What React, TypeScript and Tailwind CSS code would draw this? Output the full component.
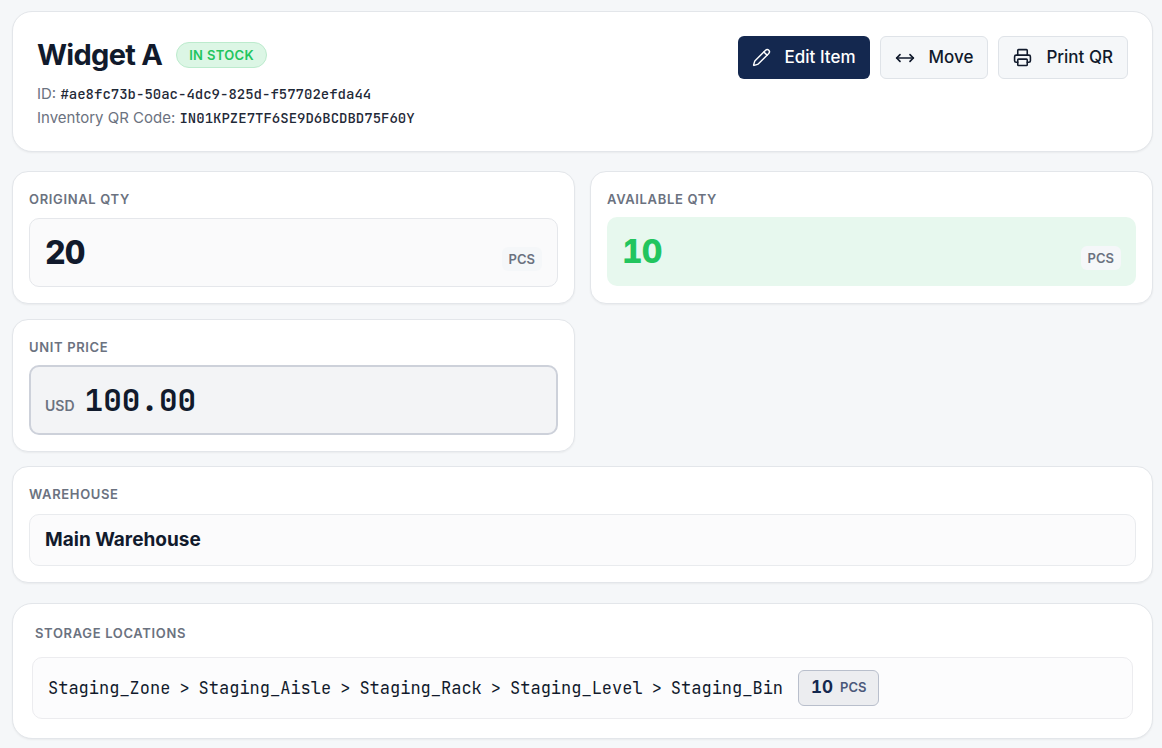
import type { ReactNode } from 'react'
import { MoveHorizontal, Pencil, Printer } from 'lucide-react'

const item = {
  name: 'Widget A',
  status: 'In stock',
  id: '#ae8fc73b-50ac-4dc9-825d-f57702efda44',
  qrCode: 'IN01KPZE7TF6SE9D6BCDBD75F60Y',
  originalQty: '20',
  availableQty: '10',
  unit: 'PCS',
  currency: 'USD',
  unitPrice: '100.00',
  warehouse: 'Main Warehouse',
}

const locations = [
  {
    path: ['Staging_Zone', 'Staging_Aisle', 'Staging_Rack', 'Staging_Level', 'Staging_Bin'],
    qty: '10',
  },
]

const mono = "font-['JetBrains_Mono','Liberation_Mono',monospace]"
const cardClass = 'border border-[#e3e6ea] bg-white shadow-xs'
const labelClass = 'text-[13px] leading-5 font-semibold uppercase tracking-wider text-[#6b7280]'
const buttonClass = 'flex h-[43px] items-center gap-[14px] rounded-md px-[14px] text-[17px] font-medium'
const secondaryButton = `${buttonClass} border border-[#dfe3e8] bg-[#f5f7f9] text-[#111a2c]`

function UnitTag({ children }: { children: ReactNode }) {
  return (
    <span className="mt-3 rounded-md bg-[#f5f7f9] px-[7px] py-0.5 text-[13px] leading-5 font-semibold text-[#6b7280]">
      {children}
    </span>
  )
}

function Card({ label, children }: { label: string; children: ReactNode }) {
  return (
    <section className={`${cardClass} rounded-2xl px-4 pt-[17px] pb-4`}>
      <h2 className={labelClass}>{label}</h2>
      {children}
    </section>
  )
}

export default function App() {
  return (
    <main className="min-h-screen bg-[#f5f7f9] pt-[11px] pr-[9px] pb-[9px] pl-3 font-['Inter',sans-serif] text-[#111a2c]">
      <header className={`flex flex-wrap items-start justify-between gap-4 ${cardClass} rounded-[20px] px-6 pt-6 pb-[21px]`}>
        <div>
          <div className="flex items-center gap-[14px]">
            <h1 className="text-[29px] leading-[38px] font-bold tracking-tight">{item.name}</h1>
            <span className="rounded-full border border-[#bcebcd] bg-[#dcf6e5] px-3 text-[13px] leading-6 font-semibold tracking-wide text-[#22c55e] uppercase">
              {item.status}
            </span>
          </div>
          <p className="mt-2 text-[15px] leading-6 text-[#6b7280]">
            ID: <span className={`${mono} text-[14px] font-medium text-[#1f2937]`}>{item.id}</span>
          </p>
          <p className="text-[15px] leading-6 text-[#6b7280]">
            Inventory QR Code: <span className={`${mono} text-[14px] font-medium text-[#1f2937]`}>{item.qrCode}</span>
          </p>
        </div>
        <div className="flex gap-[10px]">
          <button type="button" className={`${buttonClass} bg-[#14284f] text-white`}>
            <Pencil size={19} strokeWidth={1.8} />
            Edit Item
          </button>
          <button type="button" className={secondaryButton}>
            <MoveHorizontal size={20} strokeWidth={2} />
            Move
          </button>
          <button type="button" className={secondaryButton}>
            <Printer size={19} strokeWidth={2} />
            Print QR
          </button>
        </div>
      </header>

      <div className="mt-[19px] grid grid-cols-2 gap-[15px]">
        <Card label="Original Qty">
          <div className="mt-[9px] flex h-[69px] items-center justify-between rounded-[10px] border border-[#e5e7eb] bg-[#fafafb] px-[15px]">
            <span className="text-[32px] leading-10 font-extrabold tracking-tight tabular-nums">{item.originalQty}</span>
            <UnitTag>{item.unit}</UnitTag>
          </div>
        </Card>
        <Card label="Available Qty">
          <div className="mt-2 flex h-[69px] items-center justify-between rounded-[10px] bg-[#e7f8ee] px-[15px]">
            <span className="text-[32px] leading-10 font-extrabold tracking-tight text-[#22c55e] tabular-nums">
              {item.availableQty}
            </span>
            <UnitTag>{item.unit}</UnitTag>
          </div>
        </Card>
        <Card label="Unit Price">
          <div className="mt-2 flex h-[70px] items-center gap-[10px] rounded-[10px] border-2 border-[#cdd1da] bg-[#f3f4f6] px-[14px]">
            <span className="mt-3 text-[14px] leading-5 font-semibold text-[#6b7280]">{item.currency}</span>
            <span className={`${mono} text-[31px] leading-10 font-semibold`}>{item.unitPrice}</span>
          </div>
        </Card>
      </div>

      <div className="mt-[14px]">
        <Card label="Warehouse">
          <div className="mt-[10px] flex h-[52px] items-center rounded-[10px] border border-[#e9ebee] bg-[#fbfbfc] px-[15px] text-[19px] font-bold">
            {item.warehouse}
          </div>
        </Card>
      </div>

      <section className={`mt-5 ${cardClass} rounded-[20px] px-[19px] pt-[19px] pb-[19px]`}>
        <h2 className={`${labelClass} pl-[3px]`}>Storage Locations</h2>
        {locations.map((location) => (
          <div
            key={location.path.join('/')}
            className="mt-[14px] flex min-h-[62px] flex-wrap items-center gap-[15px] rounded-[10px] border border-[#ececef] bg-[#fcfcfd] px-[15px] py-3"
          >
            <ol className={`flex flex-wrap gap-[9px] ${mono} text-[17px] leading-6`}>
              {location.path.map((step, i) => (
                <li key={step} className="flex gap-[9px]">
                  {i > 0 && <span>&gt;</span>}
                  <span>{step}</span>
                </li>
              ))}
            </ol>
            <span className="flex h-9 items-center gap-[7px] rounded-md border border-[#b9bfcc] bg-[#ecedf0] px-3 text-[#14284f]">
              <span className="text-[17px] font-bold tabular-nums">{location.qty}</span>
              <span className="text-[13px] font-semibold text-[#4b587a]">{item.unit}</span>
            </span>
          </div>
        ))}
      </section>
    </main>
  )
}
